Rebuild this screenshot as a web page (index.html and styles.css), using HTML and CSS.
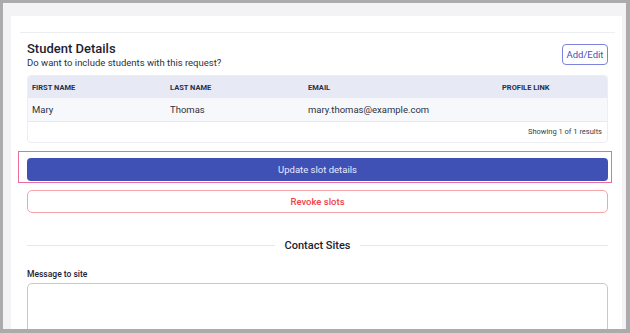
FILE: index.html
```html
<!DOCTYPE html>
<html lang="en">
<head>
    <meta charset="UTF-8">
    <meta name="viewport" content="width=device-width, initial-scale=1.0">
    <title>Slot request</title>
    <link rel="stylesheet" href="styles.css">
</head>
<body>

<div class="frame">
    <div class="card">
        <div class="topbar"></div>

        <!-- students -->
        <div class="section-head">
            <div>
                <h2 class="title">Student Details</h2>
                <p class="subtitle">Do want to include students with this request?</p>
            </div>
            <button class="btn-outline">Add/Edit</button>
        </div>

        <div class="table-box">
            <table class="students">
                <thead>
                    <tr>
                        <th class="col-first">First name</th>
                        <th class="col-last">Last name</th>
                        <th class="col-email">Email</th>
                        <th>Profile link</th>
                    </tr>
                </thead>
                <tbody>
                    <tr>
                        <td>Mary</td>
                        <td>Thomas</td>
                        <td>mary.thomas@example.com</td>
                        <td></td>
                    </tr>
                </tbody>
            </table>
            <div class="table-foot">Showing 1 of 1 results</div>
        </div>

        <!-- actions -->
        <div class="highlight">
            <button class="btn-primary">Update slot details</button>
        </div>
        <button class="btn-danger">Revoke slots</button>

        <!-- contact -->
        <div class="divider">
            <span class="divider-line"></span>
            <span class="divider-text">Contact Sites</span>
            <span class="divider-line"></span>
        </div>

        <label class="field-label" for="message">Message to site</label>
        <textarea id="message" class="message"></textarea>
    </div>
</div>

</body>
</html>
```

FILE: styles.css
```css
* {
    box-sizing: border-box;
}

body {
    margin: 0;
    background-color: #ababab;
    font-family: Roboto, "Liberation Sans", sans-serif;
    color: #1f2433;
}

.frame {
    width: 630px;
    height: 333px;
    border: 3px solid #ababab;
    border-right-width: 4px;
    border-bottom-width: 4px;
    background-color: #f3f3f5;
    overflow: hidden;
    padding: 13px 4px 0 8px;
}

.card {
    background-color: #fff;
    height: 100%;
    padding: 0 14px 0 16px;
}

.topbar {
    height: 17px;
    border-bottom: 1px solid #eceef2;
    margin: 0 -7px;
}

.section-head {
    display: flex;
    justify-content: space-between;
    align-items: flex-start;
    margin-top: 8px;
}

.title {
    margin: 0;
    font-size: 13px;
    line-height: 16px;
    font-weight: 500;
    color: #1d2233;
}

.subtitle {
    margin: 0;
    font-size: 9.5px;
    line-height: 12px;
    color: #2d3140;
}

.btn-outline {
    margin-top: 3px;
    width: 46px;
    height: 21px;
    padding: 0;
    background-color: #fff;
    border: 1px solid #7d82dc;
    border-radius: 4px;
    color: #4a4fbd;
    font-family: inherit;
    font-size: 9.5px;
}

/* table */
.table-box {
    margin-top: 6px;
    border: 1px solid #eceef3;
    border-radius: 4px;
    overflow: hidden;
}

.students {
    width: 100%;
    border-collapse: collapse;
    table-layout: fixed;
}

.students th {
    height: 22px;
    background-color: #e7e9f5;
    text-align: left;
    text-transform: uppercase;
    font-size: 7.5px;
    font-weight: 700;
    color: #2a2f45;
    padding: 0 0 0 4px;
}

.col-first,
.col-last {
    width: 138px;
}

.col-email {
    width: 194px;
}

.students td {
    height: 23px;
    background-color: #f7f8fb;
    border-bottom: 1px solid #e8e9ee;
    font-size: 9.5px;
    color: #2d3140;
    padding: 0 0 0 4px;
}

.table-foot {
    height: 20px;
    line-height: 20px;
    text-align: right;
    padding-right: 5px;
    font-size: 7.5px;
    color: #3a3d48;
}

/* buttons */
.highlight {
    margin: 8px -4px 0 -9px;
    padding: 6px 3px 1px 8px;
    border: 1px solid #ec6d9c;
}

.btn-primary {
    display: block;
    width: 100%;
    height: 23px;
    border: none;
    border-radius: 4px;
    background-color: #3f51b5;
    color: #e8eaff;
    font-family: inherit;
    font-size: 9.5px;
}

.btn-danger {
    display: block;
    width: 100%;
    height: 23px;
    margin-top: 7px;
    background-color: #fff;
    border: 1px solid #f5a4a8;
    border-radius: 5px;
    color: #f0434c;
    font-family: inherit;
    font-size: 9.5px;
    font-weight: 500;
}

/* contact */
.divider {
    display: flex;
    align-items: center;
    gap: 10px;
    margin-top: 26px;
    line-height: 14px;
}

.divider-line {
    flex: 1;
    height: 1px;
    background-color: #e2e8f0;
}

.divider-text {
    font-size: 11px;
    font-weight: 500;
    color: #1d2233;
}

.field-label {
    display: block;
    margin-top: 15px;
    font-size: 8.5px;
    line-height: 12px;
    font-weight: 500;
    color: #1d2233;
}

.message {
    display: block;
    width: 100%;
    height: 70px;
    margin-top: 3px;
    border: 1px solid #c8c8c8;
    border-radius: 5px;
    resize: none;
}
```
